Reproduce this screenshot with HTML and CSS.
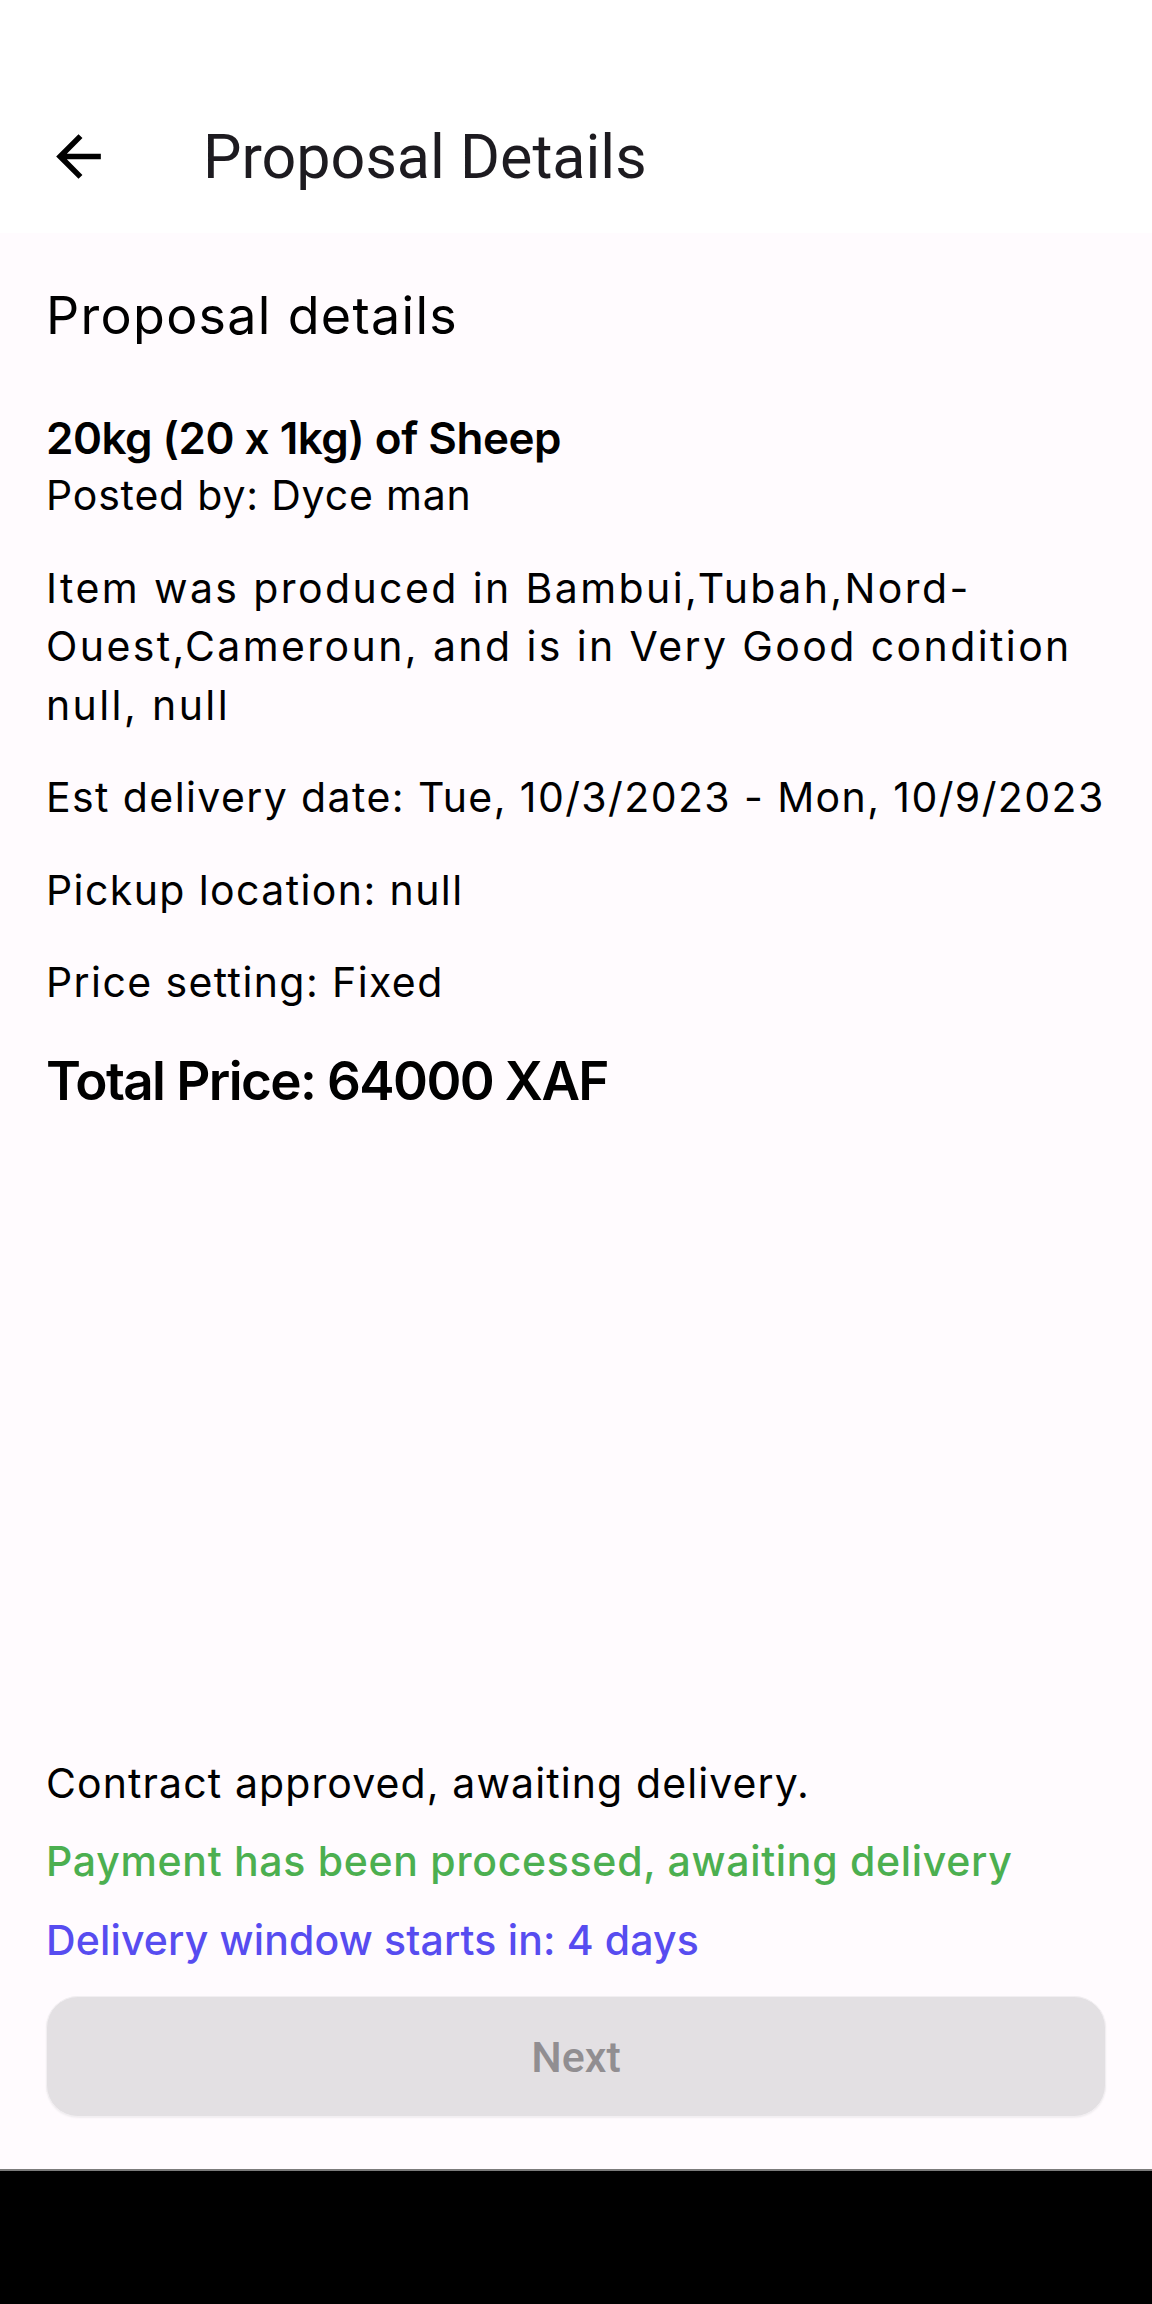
FILE: index.html
```html
<!DOCTYPE html>
<html lang="en">
<head>
<meta charset="utf-8">
<title>Proposal Details</title>
<link rel="stylesheet" href="styles.css">
</head>
<body>
<div class="screen">
  <header class="appbar">
    <button class="back" aria-label="Back">
      <svg viewBox="0 0 24 24" width="67" height="67"><path d="M20 11H7.83l5.59-5.59L12 4l-8 8 8 8 1.41-1.41L7.83 13H20v-2z" fill="#000"/></svg>
    </button>
    <h1 class="appbar-title">Proposal Details</h1>
  </header>
  <main class="content">
    <section class="details">
      <h2 class="heading">Proposal details</h2>
      <p class="item-title">20kg (20 x 1kg) of Sheep</p>
      <p class="line posted">Posted by: Dyce man</p>
      <p class="line origin">Item was produced in Bambui,Tubah,Nord-Ouest,Cameroun, and is in Very Good condition null, null</p>
      <p class="line">Est delivery date: Tue, 10/3/2023 - Mon, 10/9/2023</p>
      <p class="line">Pickup location: null</p>
      <p class="line">Price setting: Fixed</p>
      <p class="total">Total Price: 64000 XAF</p>
    </section>
    <section class="status">
      <p class="line contract">Contract approved, awaiting delivery.</p>
      <p class="line paid">Payment has been processed, awaiting delivery</p>
      <p class="line window">Delivery window starts in: 4 days</p>
    </section>
    <button class="next" disabled>Next</button>
  </main>
  <div class="navbar"></div>
</div>
</body>
</html>
```
FILE: styles.css
```css
* { box-sizing: border-box; }
html, body { margin: 0; padding: 0; }
body { background: #000; }
p, h1, h2 { margin: 0; }

.screen {
  width: 1152px;
  height: 2304px;
  display: flex;
  flex-direction: column;
  background: #fffbfe;
  font-family: "Inter", "Noto Sans", sans-serif;
  font-feature-settings: "calt" 0;
  color: #000;
}

.appbar {
  height: 233px;
  flex: none;
  background: #ffffff;
  display: flex;
  align-items: center;
  padding-top: 80px;
}
.back {
  width: 157px;
  height: 100px;
  border: 0;
  background: none;
  padding: 0;
  display: flex;
  align-items: center;
  justify-content: center;
}
.back svg { display: block; }
.appbar-title {
  margin-left: 46px;
  font-family: "Roboto", sans-serif;
  font-weight: 400;
  font-size: 61px;
  line-height: 70px;
  color: #1d1b20;
}

.content {
  flex: 1;
  display: flex;
  flex-direction: column;
  padding: 53px 46px 52px;
}

.heading {
  font-weight: 400;
  font-size: 52px;
  line-height: 60px;
  letter-spacing: 1.3px;
}
.item-title {
  margin-top: 64px;
  font-weight: 600;
  font-size: 44px;
  line-height: 56px;
  letter-spacing: -0.5px;
}
.line {
  font-size: 41px;
  line-height: 58.5px;
  letter-spacing: 1.4px;
}
.details .line { margin-top: 34px; }
.details .posted { margin-top: 0; letter-spacing: 0.8px; }
.details .origin { letter-spacing: 2.4px; }
.total {
  margin-top: 34px;
  font-weight: 600;
  font-size: 53px;
  line-height: 70px;
  letter-spacing: -1.6px;
}

.status { margin-top: auto; }
.status .line + .line { margin-top: 20px; }
.contract { letter-spacing: 1.1px; }
.paid { color: #4caf50; font-weight: 500; letter-spacing: 0.7px; }
.window { color: #574cf0; font-weight: 500; letter-spacing: 0.15px; }

.next {
  margin-top: 27px;
  height: 121px;
  width: 100%;
  border: 1px solid #f2eff2;
  border-radius: 32px;
  background: #e3e0e3;
  color: #918e91;
  font-family: "Roboto", sans-serif;
  font-weight: 500;
  font-size: 43px;
  box-shadow: 0 1px 2px rgba(0, 0, 0, 0.06);
}

.navbar {
  height: 135px;
  flex: none;
  background: #000;
  border-top: 2px solid #7c7c7c;
}
```
